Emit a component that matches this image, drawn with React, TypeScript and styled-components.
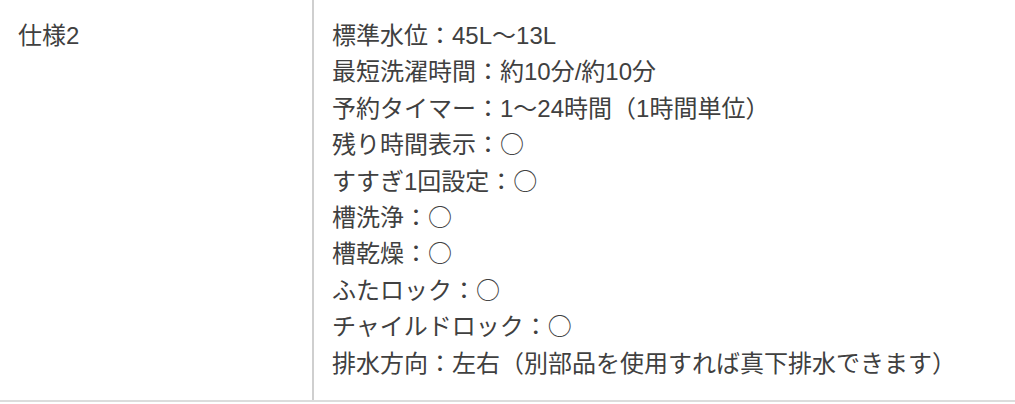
import styled, { createGlobalStyle } from "styled-components";

const GlobalStyle = createGlobalStyle`
	html, body {
		margin: 0;
		padding: 0;
		background: #fff;
	}
	body {
		font-family: "Liberation Sans", "Noto Sans CJK JP", sans-serif;
		color: #404040;
	}
`;

const SpecTable = styled.div`
	display: grid;
	grid-template-columns: 314px 1fr;
	width: 100%;
	border-bottom: 2px solid #dcdcdc;
`;

const Label = styled.div`
	padding: 18px 18px;
	font-size: 24px;
	line-height: 36.4px;
	border-right: 2px solid #cfcfcf;
`;

const Value = styled.ul`
	margin: 0;
	padding: 18px 18px;
	list-style: none;
	font-size: 24px;
	line-height: 36.4px;
`;

const Line = styled.li`
	height: 36.4px;
	white-space: nowrap;
`;

const Mark = styled.span`
	font-family: "Noto Sans CJK JP", sans-serif;
	line-height: 1;
`;

const specs = [
	"標準水位：45L〜13L",
	"最短洗濯時間：約10分/約10分",
	"予約タイマー：1〜24時間（1時間単位）",
	"残り時間表示：○",
	"すすぎ1回設定：○",
	"槽洗浄：○",
	"槽乾燥：○",
	"ふたロック：○",
	"チャイルドロック：○",
	"排水方向：左右（別部品を使用すれば真下排水できます）",
];

export default function App() {
	return (
		<>
			<GlobalStyle />
			<SpecTable>
				<Label>仕様2</Label>
				<Value>
					{specs.map((s) => (
						<Line key={s}>
							{s.endsWith("○") ? (
								<>
									{s.slice(0, -1)}
									<Mark>○</Mark>
								</>
							) : (
								s
							)}
						</Line>
					))}
				</Value>
			</SpecTable>
		</>
	);
}
